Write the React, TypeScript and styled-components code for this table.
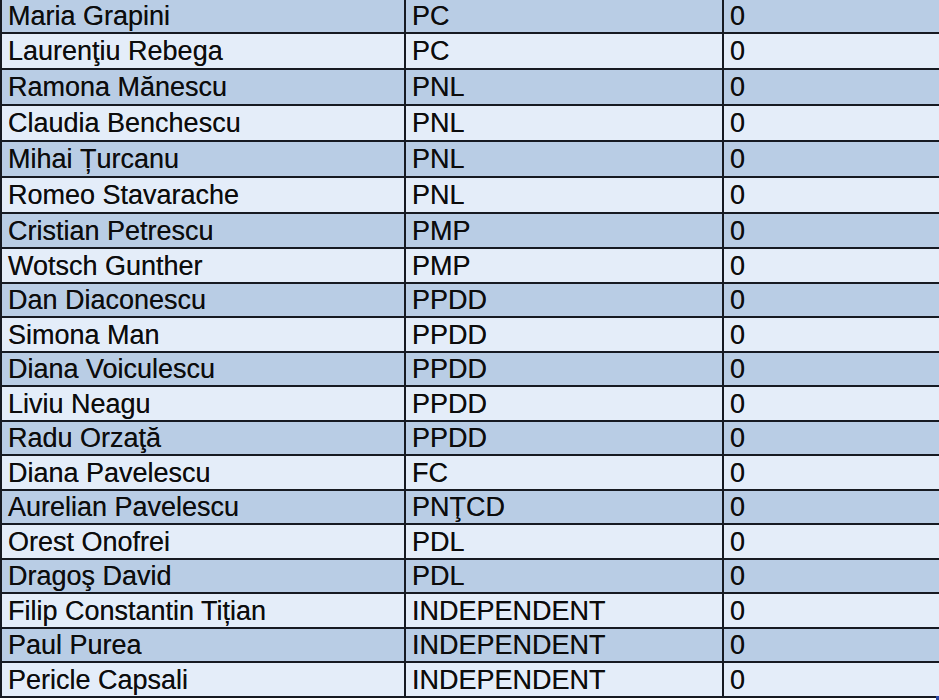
import React from "react";
import styled, { createGlobalStyle } from "styled-components";

interface Member {
    name: string;
    party: string;
    votes: number;
}

const members: Member[] = [
    { name: "Maria Grapini", party: "PC", votes: 0 },
    { name: "Laurenţiu Rebega", party: "PC", votes: 0 },
    { name: "Ramona Mănescu", party: "PNL", votes: 0 },
    { name: "Claudia Benchescu", party: "PNL", votes: 0 },
    { name: "Mihai Țurcanu", party: "PNL", votes: 0 },
    { name: "Romeo Stavarache", party: "PNL", votes: 0 },
    { name: "Cristian Petrescu", party: "PMP", votes: 0 },
    { name: "Wotsch Gunther", party: "PMP", votes: 0 },
    { name: "Dan Diaconescu", party: "PPDD", votes: 0 },
    { name: "Simona Man", party: "PPDD", votes: 0 },
    { name: "Diana Voiculescu", party: "PPDD", votes: 0 },
    { name: "Liviu Neagu", party: "PPDD", votes: 0 },
    { name: "Radu Orzaţă", party: "PPDD", votes: 0 },
    { name: "Diana Pavelescu", party: "FC", votes: 0 },
    { name: "Aurelian Pavelescu", party: "PNŢCD", votes: 0 },
    { name: "Orest Onofrei", party: "PDL", votes: 0 },
    { name: "Dragoş David", party: "PDL", votes: 0 },
    { name: "Filip Constantin Tițian", party: "INDEPENDENT", votes: 0 },
    { name: "Paul Purea", party: "INDEPENDENT", votes: 0 },
    { name: "Pericle Capsali", party: "INDEPENDENT", votes: 0 },
];

// row heights (with the 2px bottom line) as they appear in the sheet
const rowHeights = [34, 36, 36, 36, 36, 36, 35, 35, 34, 35, 34, 35, 34, 35, 34, 35, 34, 35, 34, 35];

const GlobalStyle = createGlobalStyle`
    html, body {
        margin: 0;
        padding: 0;
        background: #ffffff;
        overflow: hidden;
    }
`;

const Sheet = styled.div`
    position: relative;
    width: 939px;
    height: 700px;
    overflow: hidden;
    font-family: "Liberation Sans", Arial, sans-serif;
    font-size: 27px;
    color: #0c0c0c;
`;

const Row = styled.div<{ $striped: boolean }>`
    display: grid;
    grid-template-columns: 404px 318px 1fr;
    box-sizing: border-box;
    border-bottom: 2px solid #161a22;
    background: ${(p) => (p.$striped ? "#b9cde5" : "#e4edf9")};
`;

const Cell = styled.div`
    display: flex;
    align-items: center;
    box-sizing: border-box;
    border-left: 2px solid #161a22;
    padding: 1px 0 0 6px;
    white-space: nowrap;
    overflow: hidden;
    line-height: 1;
    text-shadow: 0 0 0.4px rgba(0, 0, 0, 0.6);
`;

const FillHandle = styled.div`
    position: absolute;
    right: 0;
    bottom: 0;
    width: 3px;
    height: 4px;
    background: #2a4aa8;
`;

const App: React.FC = () => {
    return (
        <>
            <GlobalStyle />
            <Sheet>
                {members.map((m, i) => (
                    <Row key={m.name} $striped={i % 2 === 0} style={{ height: rowHeights[i] }}>
                        <Cell>{m.name}</Cell>
                        <Cell>{m.party}</Cell>
                        <Cell>{m.votes}</Cell>
                    </Row>
                ))}
                <FillHandle />
            </Sheet>
        </>
    );
};

export default App;
